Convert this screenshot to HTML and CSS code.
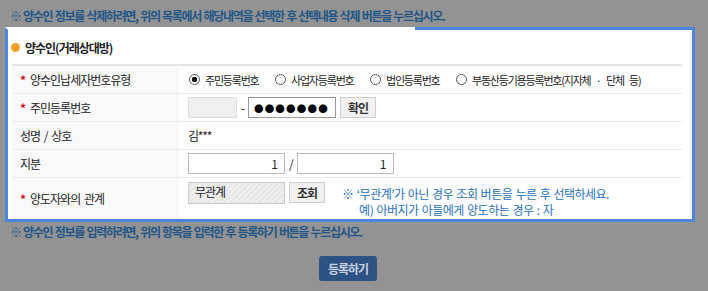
FILE: index.html
```html
<!DOCTYPE html>
<html>
  <head>
    <title>양수인 등록</title>
    <meta charset="utf-8" />
    <link rel="stylesheet" href="styles.css">
  </head>
  <body>
    <p class="notice">※ 양수인 정보를 삭제하려면, 위의 목록에서 해당내역을 선택한 후 선택내용 삭제 버튼을 누르십시오.</p>

    <div class="panel">
      <h2 class="panel-title"><span class="bullet"></span>양수인(거래상대방)</h2>
      <table class="form-table">
        <tr>
          <th><span class="req">*</span>양수인납세자번호유형</th>
          <td>
            <label class="radio"><input type="radio" name="idtype" checked> 주민등록번호</label>
            <label class="radio"><input type="radio" name="idtype"> 사업자등록번호</label>
            <label class="radio"><input type="radio" name="idtype"> 법인등록번호</label>
            <label class="radio"><input type="radio" name="idtype"> 부동산등기용등록번호(지자체 · 단체 등)</label>
          </td>
        </tr>
        <tr>
          <th><span class="req">*</span>주민등록번호</th>
          <td>
            <div class="line">
              <input type="text" class="field field-front" disabled>
              <span class="dash">-</span>
              <input type="text" class="field field-back" value="●●●●●●●">
              <button class="btn-small">확인</button>
            </div>
          </td>
        </tr>
        <tr>
          <th class="plain">성명 / 상호</th>
          <td>김***</td>
        </tr>
        <tr>
          <th class="plain">지분</th>
          <td>
            <div class="line">
              <input type="text" class="field field-share" value="1">
              <span class="slash">/</span>
              <input type="text" class="field field-share" value="1">
            </div>
          </td>
        </tr>
        <tr class="tall">
          <th><span class="req">*</span>양도자와의 관계</th>
          <td>
            <div class="line top">
              <input type="text" class="field field-relation" value="무관계" readonly>
              <button class="btn-small">조회</button>
              <div class="hint">
                <p>※ ‘무관계’가 아닌 경우 조회 버튼을 누른 후 선택하세요.</p>
                <p class="indent">예) 아버지가 아들에게 양도하는 경우 : 자</p>
              </div>
            </div>
          </td>
        </tr>
      </table>
    </div>

    <p class="notice notice-bottom">※ 양수인 정보를 입력하려면, 위의 항목을 입력한 후 등록하기 버튼을 누르십시오.</p>

    <div class="actions">
      <button class="btn-submit">등록하기</button>
    </div>
  </body>
</html>
```

FILE: styles.css
```css
body {
  margin: 0;
  background-color: #939393;
  font-family: "Noto Sans CJK KR", "Noto Sans", sans-serif;
  font-size: 12px;
  letter-spacing: -1.2px;
  word-spacing: 2px;
  color: #222;
}

p {
  margin: 0;
}

.notice {
  padding: 7px 0 0 10px;
  height: 20px;
  color: #1f5687;
  font-weight: bold;
  letter-spacing: -1.3px;
  word-spacing: 1px;
}

.notice-bottom {
  padding-top: 1px;
}

.panel {
  margin: 0 0 0 5px;
  width: 684px;
  border: 3px solid #4c86dc;
  border-top-color: transparent;
  background: linear-gradient(#4c86dc, #4c86dc) right top / 280px 3px no-repeat, #fff;
  background-origin: border-box;
}

.panel-title {
  display: flex;
  align-items: center;
  margin: 0;
  height: 34px;
  padding-left: 3px;
  font-size: 12px;
  font-weight: bold;
  letter-spacing: -1px;
  color: #222;
}

.bullet {
  width: 9px;
  height: 9px;
  margin-right: 5px;
  border-radius: 50%;
  background-color: #f0a12e;
}

.form-table {
  margin-left: 4px;
  width: 670px;
  border-collapse: collapse;
  border-top: 2px solid #e4e4e4;
}

.form-table th,
.form-table td {
  border-bottom: 1px solid #ececec;
  height: 27px;
  padding: 0;
  text-align: left;
  font-weight: normal;
}

.form-table th {
  width: 167px;
  padding-left: 8px;
  background-color: #f9f9f9;
  box-sizing: border-box;
  letter-spacing: -1px;
  word-spacing: 2px;
}

.form-table td {
  padding-left: 9px;
}

.form-table tr.tall th,
.form-table tr.tall td {
  height: 41px;
  border-bottom: none;
}

.req {
  display: inline-block;
  width: 10px;
  color: #d0121b;
  font-weight: bold;
}

.radio {
  display: inline-flex;
  align-items: center;
  margin-right: 12px;
  font-size: 11px;
  letter-spacing: -1.2px;
  word-spacing: 4px;
}

.radio input {
  -webkit-appearance: none;
  appearance: none;
  width: 11px;
  height: 11px;
  margin: 0 5px 0 1px;
  border: 1px solid #555;
  border-radius: 50%;
  background-color: #fff;
}

.radio input:checked {
  background: radial-gradient(circle, #111 0 2.5px, #fff 3px);
}

.line {
  display: flex;
  align-items: center;
}

.line.top {
  align-items: flex-start;
  padding-top: 2px;
}

.field {
  height: 21px;
  padding: 0 6px;
  border: 1px solid #b9b9b9;
  box-sizing: border-box;
  font-family: inherit;
  font-size: 12px;
  color: #222;
}

.field-front {
  width: 49px;
  background-color: #efefef;
  border-color: #dedede;
}

.field-back {
  width: 88px;
  padding: 0 5px;
  border-color: #9a9a9a;
  font-size: 9.5px;
  letter-spacing: 1.2px;
  color: #000;
}

.dash {
  margin: 0 4px;
}

.slash {
  margin: 0 4px;
}

.field-share {
  width: 97px;
  text-align: right;
}

.field-relation {
  width: 97px;
  height: 22px;
  padding-bottom: 3px;
  border-color: #c8c8c8;
  letter-spacing: -1px;
  background: repeating-linear-gradient(135deg, #efefef 0 2px, #e6e6e6 2px 4px);
}

.btn-small {
  height: 21px;
  margin-left: 4px;
  padding: 0 7px;
  border: 1px solid #cfcfcf;
  background-color: #f1f1f1;
  font-family: inherit;
  font-size: 12px;
  font-weight: bold;
  letter-spacing: -1px;
  color: #333;
}

.hint {
  margin: 4px 0 0 17px;
  color: #1f70c0;
  line-height: 16px;
  letter-spacing: -0.5px;
  word-spacing: 1px;
}

.hint .indent {
  padding-left: 17px;
}

.actions {
  padding: 13px 0 0 319px;
}

.btn-submit {
  width: 58px;
  height: 25px;
  border: none;
  border-radius: 3px;
  background-color: #2d5284;
  color: #c9d3df;
  font-family: inherit;
  font-size: 12px;
  font-weight: bold;
  letter-spacing: -1px;
}
```
